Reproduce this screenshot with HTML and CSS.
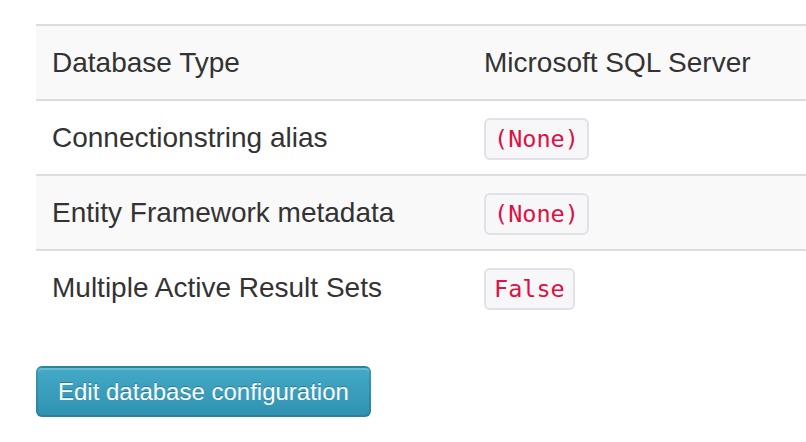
FILE: index.html
```html
<!DOCTYPE html>
<html>
<head>
<meta charset="utf-8">
<link rel="stylesheet" href="styles.css">
</head>
<body>
<div class="page">
  <table class="props">
    <tbody>
      <tr class="odd">
        <td class="label">Database Type</td>
        <td>Microsoft SQL Server</td>
      </tr>
      <tr>
        <td class="label">Connectionstring alias</td>
        <td><code>(None)</code></td>
      </tr>
      <tr class="odd">
        <td class="label">Entity Framework metadata</td>
        <td><code>(None)</code></td>
      </tr>
      <tr>
        <td class="label">Multiple Active Result Sets</td>
        <td><code>False</code></td>
      </tr>
    </tbody>
  </table>
  <a class="btn-info" href="#">Edit database configuration</a>
</div>
</body>
</html>
```
FILE: styles.css
```css
html, body {
  margin: 0;
  padding: 0;
  overflow: hidden;
  background: #fff;
}
body {
  font-family: "Liberation Sans", Arial, Helvetica, sans-serif;
  font-size: 28px;
  color: #333;
}
.page {
  padding: 24px 0 0 36px;
}
.props {
  width: 900px;
  border-collapse: collapse;
  border-spacing: 0;
  margin-bottom: 42px;
}
.props td {
  padding: 16px 16px 16px 16px;
  line-height: 41px;
  border-top: 2px solid #ddd;
  text-align: left;
  vertical-align: top;
  white-space: nowrap;
}
.props td.label {
  width: 400px;
}
.props tr.odd td {
  background: #f9f9f9;
}
code {
  font-family: "DejaVu Sans Mono", Menlo, Monaco, monospace;
  font-size: 23.5px;
  line-height: 20px;
  color: #dd1144;
  background: #f7f7f9;
  border: 2px solid #e1e1e8;
  border-radius: 6px;
  padding: 5px 8px;
}
.btn-info {
  display: inline-block;
  font-size: 24px;
  line-height: 39px;
  padding: 4px 20px;
  color: #fff;
  text-decoration: none;
  text-shadow: 0 -1px 0 rgba(0,0,0,0.25);
  background-color: #3aa0c0;
  background-image: linear-gradient(to bottom, #44aac8, #2f92b1);
  border: 2px solid rgba(0,0,0,0.1);
  border-bottom-color: rgba(0,0,0,0.25);
  border-radius: 6px;
  box-shadow: inset 0 2px 0 rgba(255,255,255,0.2), 0 2px 4px rgba(0,0,0,0.05);
}
```
